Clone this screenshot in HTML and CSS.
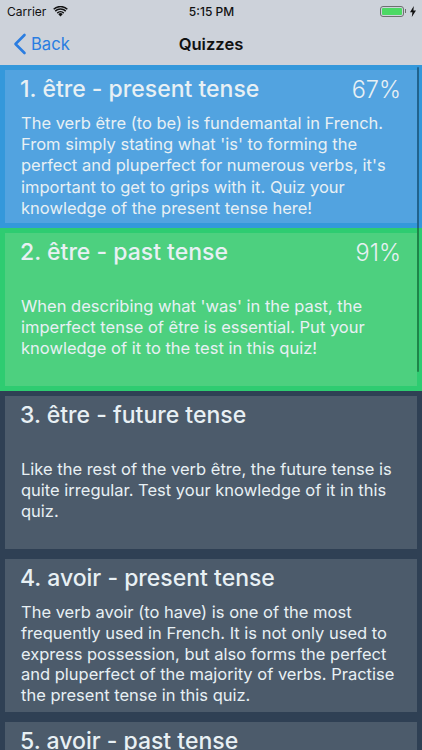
FILE: index.html
```html
<!DOCTYPE html>
<html lang="en">
<head>
<meta charset="utf-8">
<title>Quizzes</title>
<link rel="stylesheet" href="styles.css">
</head>
<body>
<div class="phone">
  <header class="top">
    <div class="status">
      <div class="status-left">
        <span>Carrier</span>
        <svg class="wifi" viewBox="0 0 16 12" width="15" height="11"><path d="M8 11.5 5.6 8.9a3.4 3.4 0 0 1 4.8 0z" fill="#111"/><path d="M3.9 7.2a5.8 5.8 0 0 1 8.2 0l-1.1 1.2a4.3 4.3 0 0 0-6 0z" fill="#111"/><path d="M1.7 5a9 9 0 0 1 12.6 0l-1.1 1.2a7.4 7.4 0 0 0-10.4 0z" fill="#111"/><path d="M0 3a11.6 11.6 0 0 1 16 0l-1.1 1.1a10 10 0 0 0-13.8 0z" fill="#111"/></svg>
      </div>
      <div class="status-time">5:15 PM</div>
      <div class="status-right">
        <span class="battery"><span class="battery-fill"></span></span>
        <span class="battery-cap"></span>
        <svg class="bolt" viewBox="0 0 6 11" width="6" height="11"><path d="M3.8 0 0 6.2h2.4L1.8 11 6 4.6H3.4z" fill="#111"/></svg>
      </div>
    </div>
    <nav class="nav">
      <a class="back">
        <svg class="chev" viewBox="0 0 14 22" width="14" height="22"><path d="M11.5 2 2.5 11l9 9" fill="none" stroke="#2a7de1" stroke-width="2.6" stroke-linecap="round" stroke-linejoin="round"/></svg>
        <span>Back</span>
      </a>
      <div class="nav-title">Quizzes</div>
    </nav>
  </header>
  <main class="list">
    <section class="row blue">
      <div class="card">
        <div class="head"><h2>1. être - present tense</h2><span class="pct">67%</span></div>
        <p>The verb être (to be) is fundemantal in French. From simply stating what 'is' to forming the perfect and pluperfect for numerous verbs, it's important to get to grips with it. Quiz your knowledge of the present tense here!</p>
      </div>
    </section>
    <section class="row green">
      <div class="card">
        <div class="head"><h2>2. être - past tense</h2><span class="pct">91%</span></div>
        <p class="mid">When describing what 'was' in the past, the imperfect tense of être is essential. Put your knowledge of it to the test in this quiz!</p>
      </div>
    </section>
    <section class="row dark">
      <div class="card">
        <div class="head"><h2>3. être - future tense</h2></div>
        <p class="mid">Like the rest of the verb être, the future tense is quite irregular. Test your knowledge of it in this quiz.</p>
      </div>
    </section>
    <section class="row dark">
      <div class="card">
        <div class="head"><h2>4. avoir - present tense</h2></div>
        <p class="tight">The verb avoir (to have) is one of the most frequently used in French. It is not only used to express possession, but also forms the perfect and pluperfect of the majority of verbs. Practise the present tense in this quiz.</p>
      </div>
    </section>
    <section class="row dark">
      <div class="card">
        <div class="head"><h2>5. avoir - past tense</h2></div>
      </div>
    </section>
    <div class="scrollbar"></div>
  </main>
</div>
</body>
</html>
```
FILE: styles.css
```css
* { box-sizing: border-box; }
html, body { margin: 0; padding: 0; }
body { width: 422px; height: 750px; overflow: hidden; background: #2f4054; font-family: Inter, "Liberation Sans", sans-serif; }
.phone { width: 422px; height: 750px; overflow: hidden; display: flex; flex-direction: column; }
.top { height: 65px; flex: none; background: #cdd2da; }
.status { height: 22px; display: grid; grid-template-columns: 1fr auto 1fr; align-items: center; padding: 0 6px 0 7px; font-size: 12px; color: #111; }
.status-left { display: flex; align-items: center; gap: 7px; }
.status-time { font-weight: 500; }
.status-right { display: flex; align-items: center; justify-content: flex-end; }
.battery { width: 24px; height: 11px; border: 1px solid #6d7170; border-radius: 3px; padding: 1px; display: block; }
.battery-fill { display: block; height: 100%; background: #4cd964; border-radius: 1px; }
.battery-cap { width: 1.5px; height: 4px; background: #6d7170; margin: 0 4px 0 1px; }
.nav { height: 43px; display: flex; align-items: center; justify-content: center; position: relative; }
.back { position: absolute; left: 13px; top: 0; height: 43px; display: flex; align-items: center; gap: 4px; color: #2a7de1; font-size: 16.6px; }
.nav-title { font-size: 16.6px; font-weight: 600; color: #111; }
.list { flex: 1; position: relative; overflow: hidden; }
.row { height: 163px; padding: 5px; }
.card { height: 153px; padding: 2px 16px 0; color: #e8f0f4; overflow: hidden; }
.blue { background: #3498db; }
.blue .card { background: #52a3e0; }
.green { background: #2ecc71; }
.green .card { background: #4dd07f; }
.dark { background: #2f4054; }
.dark .card { background: #4c5b6b; }
.head { display: flex; justify-content: space-between; align-items: center; height: 34px; }
h2 { margin: 0; font-size: 23px; font-weight: 500; line-height: 34px; margin-left: -1px; }
.pct { font-size: 23.5px; font-weight: 300; }
p { margin: 7px 0 0; font-size: 16.5px; line-height: 21.2px; font-weight: 400; }
p.mid { margin-top: 27px; }
p.tight { line-height: 20.8px; }
.scrollbar { position: absolute; right: 3px; top: 2px; width: 2.5px; height: 305px; border-radius: 2px; background: rgba(0, 0, 0, .35); }
```
